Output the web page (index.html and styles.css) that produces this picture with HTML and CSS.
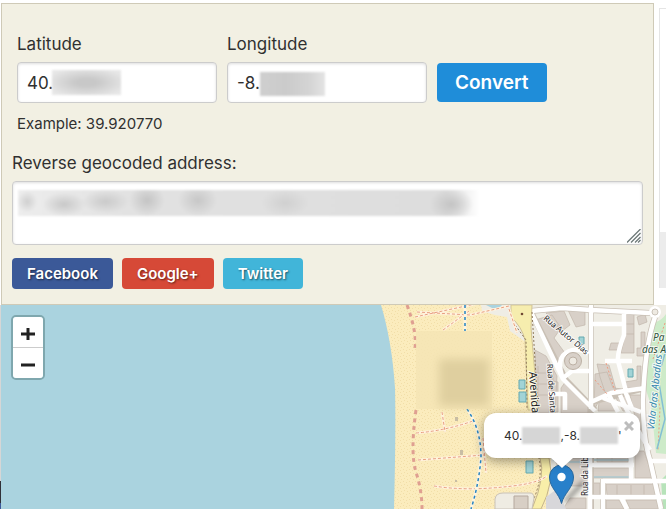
FILE: index.html
```html
<!DOCTYPE html>
<html lang="en">
<head>
<meta charset="utf-8">
<title>Coordinates converter</title>
<link rel="stylesheet" href="styles.css">
</head>
<body>
<div class="top">
  <main class="panel">
    <form class="coords">
      <div class="field">
        <label for="lat">Latitude</label>
        <div class="control"><input id="lat" type="text" value="40."><span class="mask mask-lat"></span></div>
      </div>
      <div class="field">
        <label for="lng">Longitude</label>
        <div class="control"><input id="lng" type="text" value="-8."><span class="mask mask-lng"></span></div>
      </div>
      <button class="convert" type="button">Convert</button>
    </form>
    <p class="example">Example: 39.920770</p>
    <label class="address-label" for="address">Reverse geocoded address:</label>
    <div class="control">
      <textarea id="address"></textarea>
      <span class="mask mask-address"></span>
      <svg class="grip" viewBox="0 0 14 14" aria-hidden="true"><path d="M0 13.500L13.500 0M4 13.500L13.500 4M8 13.500L13.500 8M11 13.500L13.500 11" stroke="#6d7978" stroke-width="1.300"/></svg>
    </div>
    <div class="share">
      <button class="facebook" type="button">Facebook</button>
      <button class="google" type="button">Google+</button>
      <button class="twitter" type="button">Twitter</button>
    </div>
  </main>
  <aside class="side"><div class="side-block"></div></aside>
</div>
<section class="map" aria-label="Map">
  <svg class="tiles" viewBox="1 305 665 204" preserveAspectRatio="xMinYMin slice">
    <defs>
      <pattern id="sand" width="6" height="6" patternUnits="userSpaceOnUse"><rect width="6" height="6" fill="#fbecbd"/><path d="M1 1h1v1h-1zM4 2h1v1h-1zM2 4h1v1h-1zM5 5h1v1h-1z" fill="#f1dea8"/></pattern>
      <filter id="soft" x="-30%" y="-30%" width="160%" height="160%"><feGaussianBlur stdDeviation="5"/></filter>
      <filter id="shade" x="-50%" y="-50%" width="200%" height="200%"><feGaussianBlur stdDeviation="2"/></filter>
    </defs>
    <rect x="1" y="305" width="665" height="204" fill="#aad3df"/>
    <path d="M381 305C388 328 393 356 395 388Q396 430 394 509H666V305Z" fill="url(#sand)"/>
    <!-- built-up area -->
    <path d="M481 305H666V509H548L551 460L538 413L530 345L510 331L507 317L495 315L482 311Z" fill="#efede5"/>
    <path d="M486 305h16q-3 4-10 3z" fill="#aad3df"/>
    <g fill="#d8d0c8" stroke="#c2b6aa" stroke-width=".7">
      <path d="M535 320l17-5 9 13-7 10 11 15-6 9 5 9-5 3zM546 313l18-2 6 14-8 6zM568 310l17-2v17l-9 2zM535 350l11 6 11 20-2 37h-18zM566 381l22 19v13h-27v-25zM553 381l5 1v30h-9zM594 410l1-36 12-2 6 16 10 1-24 12zM597 364l12 1 8 28-11 2-6-18zM626 311h8v42h-13l4-18zM611 343h9l-2 7h-9zM637 317l8-3 2 8-8 3zM641 332h4v24h-8v-8h4zM637 366h4v23l-14-1-2-6 12-2zM599 402l13-6 6 15h-20zM616 398l9-3 7 16h-9zM630 395h12l5 52-12-30z"/>
      <path d="M554 458h35v28h-17l-12-14zM592 468h37v10h-37zM592 483h8v12h-8zM606 484h52v11h-51zM635 451h9l9 27h-18zM606 500h13l5 9h-18zM626 500h33v9h-29zM570 498h16v11h-23zM597 452h31v10h-31z"/>
      <path d="M538 366v43M553 366v43M536 373h13M536 384h13M537 395h12M626 324h8M626 334h8M612 455v7M617 485v10M631 485v10M644 485v10"/>
    </g>
    <path d="M656 322q6-2 10-8V454l-10-1-5-48-5-15V346z" fill="#cdebc9"/>
    <path d="M661 480l5-5v34h-3z" fill="#b7e3ba"/>
    <path d="M553 460q27 4 35 0M592 460h38v17h-38" fill="none" stroke="#a9c7ce" stroke-width="2" opacity=".7"/>
    <!-- streets -->
    <g fill="none" stroke="#c9c0b5" stroke-width="6">
      <path d="M531 312L566 380L595 410M531 311L562 308L591 310L650 313M591 305V509M603 479V509M591 402L645 388M655 317Q645 345 643 400Q643 439 650 460L661 509"/>
    </g>
    <g fill="none" stroke="#fff" stroke-width="4.500" stroke-linejoin="round">
      <path d="M531 311L562 308L591 310L650 313M531 312L563 379L595 411M591 305V409M590 452V509M591 324h34M624 311v24q-7 18-6 26l8 30M605 361h27M563 378l9-7h18M548 394h17v16M591 402L611 393L645 388M609 395l9 17M625 391l8 20M655 317Q645 345 643 400Q643 439 650 460L661 509M603 398l38 14M562 376Q555 354 573 350Q584 349 588 354"/>
      <path d="M591 465h43M603 481h63M588 497h78M631 455v26M603 479v30M621 497l6 12M650 461h16M620 395q8 20 30 55M565 467l-3 15"/>
    </g>
    <circle cx="573" cy="361" r="8.500" fill="#d8d0c8" stroke="#bdb1a5"/><circle cx="573" cy="361" r="4" fill="#eeeae2" stroke="#bdb1a5"/>
    <circle cx="655" cy="312" r="6" fill="#fff"/><circle cx="655" cy="312" r="3" fill="#eeeae2" stroke="#cbc4ba"/>
    <!-- seafront avenue -->
    <path d="M511 305h21l-1 23 7 82h-10l-3-70q-3-13-14-23z" fill="#f6edae" stroke="#d1c394"/>
    <path d="M540 458q6 18-8 51h9q14-27 8-51z" fill="#f8eea9" stroke="#c4b48a"/>
    <path d="M532 312l6 97M513 322l13 18 1 69M529 509q15-28 10-51" fill="none" stroke="#8e7859" stroke-dasharray="2 2"/>
    <circle cx="522" cy="314" r="1.300" fill="#704933"/>
    <path d="M546 497l11-8 9 20h-20z" fill="#d8d7da"/>
    <path d="M495 509v-10q1-6 8-6h27q4 0 4 5l-2 11z" fill="#efece3" stroke="#c9c2b8"/><path d="M514 496h14v13h-14z" fill="#d8cfc5" stroke="#b5a99e"/>
    <!-- beach paths -->
    <g fill="none">
      <path d="M407 305q10 27 8 43M416 410q-6 43 0 62t6 37" stroke="#df9f91" stroke-width="3" stroke-dasharray="4 4"/>
      <path d="M415 317l60-13M417 312l53 3 39-9M416 433q28-2 57-12M418 460l66-5M434 486q36 6 86-1 19-3 27-9M443 330l26-19M442 412l3 20M483 438l3 35M509 309l8 24" stroke="#fff3df" stroke-width="2.500"/>
      <path d="M415 317l60-13M417 312l53 3 39-9M416 433q28-2 57-12M418 460l66-5M434 486q36 6 86-1 19-3 27-9M443 330l26-19M442 412l3 20M483 438l3 35M509 309l8 24" stroke="#e89f82" stroke-dasharray="3 2"/>
      <path d="M465 305v26M467 409q14 20 14 48-2 27-10 52" stroke="#fff5df" stroke-width="3"/>
      <path d="M465 305v26M467 409q14 20 14 48-2 27-10 52" stroke="#2583c2" stroke-width="1.500" stroke-dasharray="3 3"/>
      <path d="M606 363l9 28M595 380l12 14M665 323l-12 36M654 376l6 32-2 42" stroke="#ef9b80" stroke-dasharray="2 2"/>
      <path d="M657 449l8-30-7-42 8-27" stroke="#83bfd4" stroke-width="1.500"/>
    </g>
    <g fill="#c8bda4"><path d="M455 417h3v4h-3zM460 450h3v5h-3zM455 480h2v2h-2z"/></g>
    <g fill="#a1d3d6" stroke="#65a9b0"><path d="M519 380h6v9h-6zM519 392h7v10h-7zM526 461h7v12h-7zM579 337h5v7h-5zM628 369h5v8h-5z"/></g>
    <rect x="416" y="331" width="76" height="78" fill="#f5e5b5" opacity=".85"/><rect x="439" y="359" width="50" height="47" fill="#dfcf9f" filter="url(#soft)"/>
    <!-- place names -->
    <g class="place">
      <text transform="translate(543 319) rotate(40)">Rua Autor Dias</text>
      <text class="large" transform="translate(529 372) rotate(86)">Avenida</text>
      <text transform="translate(547 364) rotate(86)">Rua de Santa</text>
      <text transform="translate(588 496) rotate(-90)">Rua da Lib</text>
      <text class="park" x="653" y="341">Pa</text><text class="park" x="642" y="353">das A</text>
      <text class="water" transform="translate(654 430) rotate(-84)">Vala das Abadias</text>
    </g>
    <path d="M563 501l16-18q8-5 5 2l-16 17z" fill="#444" opacity=".45" filter="url(#shade)"/>
    <path d="M561.500 503.500C559 493 549.500 488 549.500 477a12 12 0 0 1 24 0C573.500 488 564 493 561.500 503.500Z" fill="#2880ca" stroke="#28689e"/><circle cx="561.500" cy="477" r="4.200" fill="#fff"/>
  </svg>
  <div class="zoom"><button type="button" aria-label="Zoom in"><svg viewBox="0 0 14 14"><path d="M0 7h14M7 1v12"/></svg></button><button type="button" aria-label="Zoom out"><svg viewBox="0 0 14 14"><path d="M0 7h14"/></svg></button></div>
  <div class="popup"><span>40.</span><span class="popup-mask"></span><span>,-8.</span><span class="popup-mask"></span><span>'</span><button class="close" type="button" aria-label="Close"><svg viewBox="0 0 10 10"><path d="M1 1l8 8M9 1l-8 8"/></svg></button></div>
</section>
</body>
</html>
```
FILE: styles.css
```css
* { box-sizing: border-box; }
html { height: 100%; }
body {
  display: flex;
  flex-direction: column;
  height: 100%;
  margin: 0;
  padding: 3px 0 0 1px;
  overflow: hidden;
  color: #303030;
  font: 17px/24px Inter, "Liberation Sans", sans-serif;
  background: #fff linear-gradient(#fff 0 305px, #d6d6d6 305px 481px, #303038 481px 503px, #3c5a9a 503px) 0 0 / 1px 100% no-repeat;
}
button, input, textarea { font: inherit; color: inherit; margin: 0; }
button { border: 0; padding: 0; cursor: pointer; }

.top { display: flex; gap: 5px; }
.panel {
  flex: 1;
  padding: 28px 10px 15px;
  background: #f2f0e3;
  border: 1px solid #cfcab7;
}
.coords { display: flex; align-items: flex-end; gap: 10px; padding-left: 5px; }
.field { flex: 0 1 200px; }
label { display: block; }
.field label { margin-bottom: 6px; }
.control { position: relative; }
input, textarea {
  display: block;
  width: 100%;
  background: #fff;
  border: 1px solid #ccc;
  border-radius: 4px;
  box-shadow: inset 0 1px 3px #0002;
}
input { height: 41px; padding: 0 9px; font-size: 17px; }
textarea { height: 64px; resize: none; }
.convert {
  height: 39px;
  margin-bottom: 1px;
  padding: 0 18px;
  border-radius: 4px;
  background: #1f8dd9;
  color: #fff;
  font-size: 19px;
  font-weight: 600;
}
.example { margin: 9px 0 15px 5px; font-size: 15px; }
.address-label { margin-bottom: 6px; }
.share { display: flex; gap: 9px; margin-top: 13px; }
.share button {
  height: 31px;
  padding: 0 15px;
  border-radius: 4px;
  color: #fff;
  font-size: 15px;
  font-weight: 600;
  text-shadow: 1px 1px 2px #0008;
}
.share .facebook { background: #3b5998; }
.share .google { background: #d64937; }
.share .twitter { background: #41b5d9; }

.mask { position: absolute; filter: blur(1px); }
.mask-lat { left: 35px; top: 8px; width: 69px; height: 25px; background: radial-gradient(ellipse, #c8c8c8 20%, #e7e7e7 85%); }
.mask-lng { left: 33px; top: 10px; width: 65px; height: 24px; background: linear-gradient(90deg, #cfcfcf, #cbcbcb 40%, #d4d4d4 75%, #e4e4e4); }
.mask-address {
  left: 6px;
  top: 9px;
  width: 73%;
  height: 26px;
  background:
    radial-gradient(10px 11px at 2% 45%, #cfcfcf, transparent),
    radial-gradient(22px 12px at 10% 55%, #c8c8c8, transparent),
    radial-gradient(24px 12px at 19% 45%, #cacaca, transparent),
    radial-gradient(18px 16px at 28% 40%, #c4c4c4, transparent),
    radial-gradient(20px 16px at 39% 40%, #c7c7c7, transparent),
    radial-gradient(24px 14px at 58% 50%, #d0d0d0, transparent),
    radial-gradient(22px 16px at 94% 55%, #c4c4c4, transparent),
    linear-gradient(90deg, #ededed, #e2e2e2 24%, #dddddd 93%, #fff);
}
.grip { position: absolute; right: 2px; bottom: 2px; width: 14px; height: 14px; }
.side { display: flex; flex-direction: column; width: 7px; margin: 5px 0 17px; border: solid #e5e5e5; border-width: 1px 0 0 1px; }
.side-block { height: 56px; margin-top: auto; background: #ececec; }

.map { position: relative; flex: 1; min-height: 200px; overflow: hidden; background: #aad3df; }
.tiles { position: absolute; width: 100%; height: 100%; }
.place text { font: 8px "Noto Sans", sans-serif; fill: #222; stroke: #fffb; stroke-width: 2px; paint-order: stroke; }
.place .large { font-size: 11px; }
.place .park { font-size: 10px; font-style: italic; fill: #31543f; }
.place .water { font-size: 10px; font-style: italic; fill: #3587ae; }
.zoom {
  position: absolute;
  left: 10px;
  top: 10px;
  width: 34px;
  border: 2px solid #7fa7ae;
  border-radius: 5px;
  overflow: hidden;
}
.zoom button { display: grid; place-items: center; width: 100%; height: 30px; padding-top: 3px; background: #fff; }
.zoom button + button { height: 31px; border-top: 1px solid #ccc; }
.zoom svg { width: 14px; height: 14px; stroke: #222; stroke-width: 3; }
.popup {
  position: absolute;
  left: 483px;
  top: 108px;
  display: flex;
  align-items: center;
  width: 156px;
  height: 45px;
  padding-left: 20px;
  border-radius: 12px;
  background: #fff;
  box-shadow: 0 3px 12px #0006;
  font: 12px/18px Inter, "Liberation Sans", sans-serif;
}
.popup::after {
  content: "";
  position: absolute;
  left: 66px;
  top: 44px;
  border: solid transparent;
  border-width: 11px 12px 0;
  border-top-color: #fff;
}
.popup-mask { width: 38px; height: 17px; background: #d6d6d6; filter: blur(1px); }
.close { position: absolute; right: 6px; top: 8px; width: 10px; height: 10px; background: none; }
.close svg { display: block; stroke: #bdbdbd; stroke-width: 3; }
```
